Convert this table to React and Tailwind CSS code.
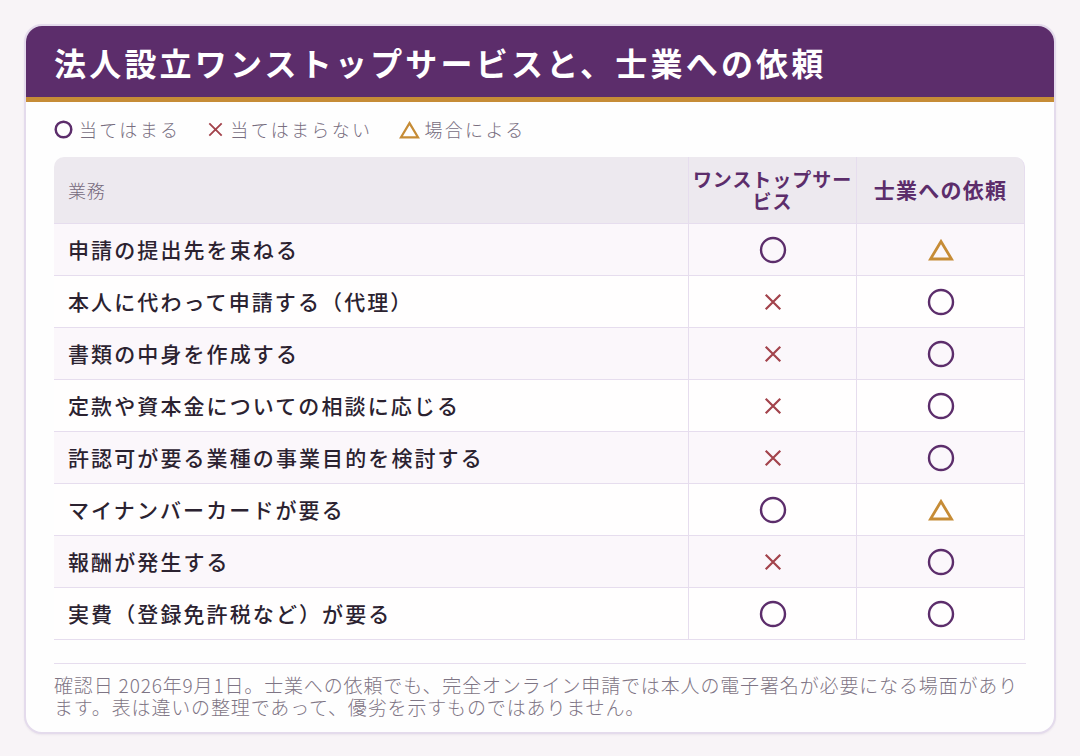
import React from 'react';

const rows = [
  ['申請の提出先を束ねる', 'o', 't'],
  ['本人に代わって申請する（代理）', 'x', 'o'],
  ['書類の中身を作成する', 'x', 'o'],
  ['定款や資本金についての相談に応じる', 'x', 'o'],
  ['許認可が要る業種の事業目的を検討する', 'x', 'o'],
  ['マイナンバーカードが要る', 'o', 't'],
  ['報酬が発生する', 'x', 'o'],
  ['実費（登録免許税など）が要る', 'o', 'o'],
];

function Mark({ kind, size = 'lg' }) {
  const s = size === 'lg';
  if (kind === 'o') {
    const d = s ? 28 : 19;
    return (
      <svg width={d} height={d} viewBox="0 0 28 28">
        <circle cx="14" cy="14" r={s ? 12 : 11.5} fill="none" stroke="#5c2d6b" strokeWidth={s ? 2.4 : 3.6} />
      </svg>
    );
  }
  if (kind === 'x') {
    const d = s ? 20 : 17;
    return (
      <svg width={d} height={d} viewBox="0 0 22 22">
        <path d="M3 3 L19 19 M19 3 L3 19" stroke="#a3434c" strokeWidth="2.4" strokeLinecap="butt" />
      </svg>
    );
  }
  const w = s ? 26 : 21;
  const h = s ? 22 : 18;
  return (
    <svg width={w} height={h} viewBox="0 0 26 22">
      <path d="M13 2.5 L23.5 20 L2.5 20 Z" fill="none" stroke="#c68c36" strokeWidth="2.8" strokeLinejoin="miter" />
    </svg>
  );
}

export default function App() {
  return (
    <div
      className="min-h-[756px] w-[1080px] bg-[#f8f4f7] p-6"
      style={{ fontFamily: '"Noto Sans CJK JP", "Noto Sans", sans-serif' }}
    >
      <div className="overflow-hidden rounded-[18px] border-2 border-[#e4dbec] bg-[#fefefe] shadow-[0_1px_2px_rgba(90,60,110,0.08)]">
        <div className="flex h-[76px] items-center border-b-[5px] border-[#c68c36] bg-[#5c2d6b] pl-[28px]">
          <h1 className="text-[32px] font-bold leading-none tracking-[0.1em] text-white">
            法人設立ワンストップサービスと、士業への依頼
          </h1>
        </div>

        <div className="px-[28px] pb-[14px]">
          <div className="flex h-[55px] items-center gap-[27px] text-[18px] font-light tracking-[0.13em] text-[#776d7e]">
            <div className="flex items-center gap-[6px]">
              <Mark kind="o" size="sm" />
              <span>当てはまる</span>
            </div>
            <div className="flex items-center gap-[6px]">
              <Mark kind="x" size="sm" />
              <span>当てはまらない</span>
            </div>
            <div className="flex items-center gap-[4px]">
              <Mark kind="t" size="sm" />
              <span>場合による</span>
            </div>
          </div>

          <div className="grid grid-cols-[635px_168px_168px]">
            <div className="flex h-[67px] items-center rounded-tl-[10px] border-r border-b border-[#e6ddee] bg-[#ede9ef] pl-[14px] text-[18px] font-light tracking-[0.04em] text-[#756a7c]">
              業務
            </div>
            <div className="flex h-[67px] items-center justify-center border-r border-b border-[#e6ddee] bg-[#ede9ef] px-0 text-center text-[19px] font-bold leading-[22px] tracking-[0.05em] text-[#5c2d6b]">
              ワンストップサービス
            </div>
            <div className="flex h-[67px] items-center justify-center rounded-tr-[10px] border-r border-b border-[#e6ddee] bg-[#ede9ef] text-[21px] font-bold tracking-[0.06em] text-[#5c2d6b]">
              士業への依頼
            </div>

            {rows.map(([label, a, b], i) => {
              const bg = i % 2 === 0 ? 'bg-[#fbf7fb]' : 'bg-[#fffefe]';
              return (
                <React.Fragment key={label}>
                  <div className={`flex h-[52px] items-center border-r border-b border-[#e6ddee] pl-[14px] text-[21px] font-medium tracking-[0.1em] text-[#2b2230] ${bg}`}>
                    {label}
                  </div>
                  <div className={`flex h-[52px] items-center justify-center border-r border-b border-[#e6ddee] ${bg}`}>
                    <Mark kind={a} />
                  </div>
                  <div className={`flex h-[52px] items-center justify-center border-r border-b border-[#e6ddee] ${bg}`}>
                    <Mark kind={b} />
                  </div>
                </React.Fragment>
              );
            })}
          </div>

          <div className="mt-[23px] border-t border-[#e6ddee] pt-[10px] text-[19px] font-light leading-[22px] tracking-[0.045em] text-[#7e7585]">
            確認日 2026年9月1日。士業への依頼でも、完全オンライン申請では本人の電子署名が必要になる場面があります。表は違いの整理であって、優劣を示すものではありません。
          </div>
        </div>
      </div>
    </div>
  );
}
